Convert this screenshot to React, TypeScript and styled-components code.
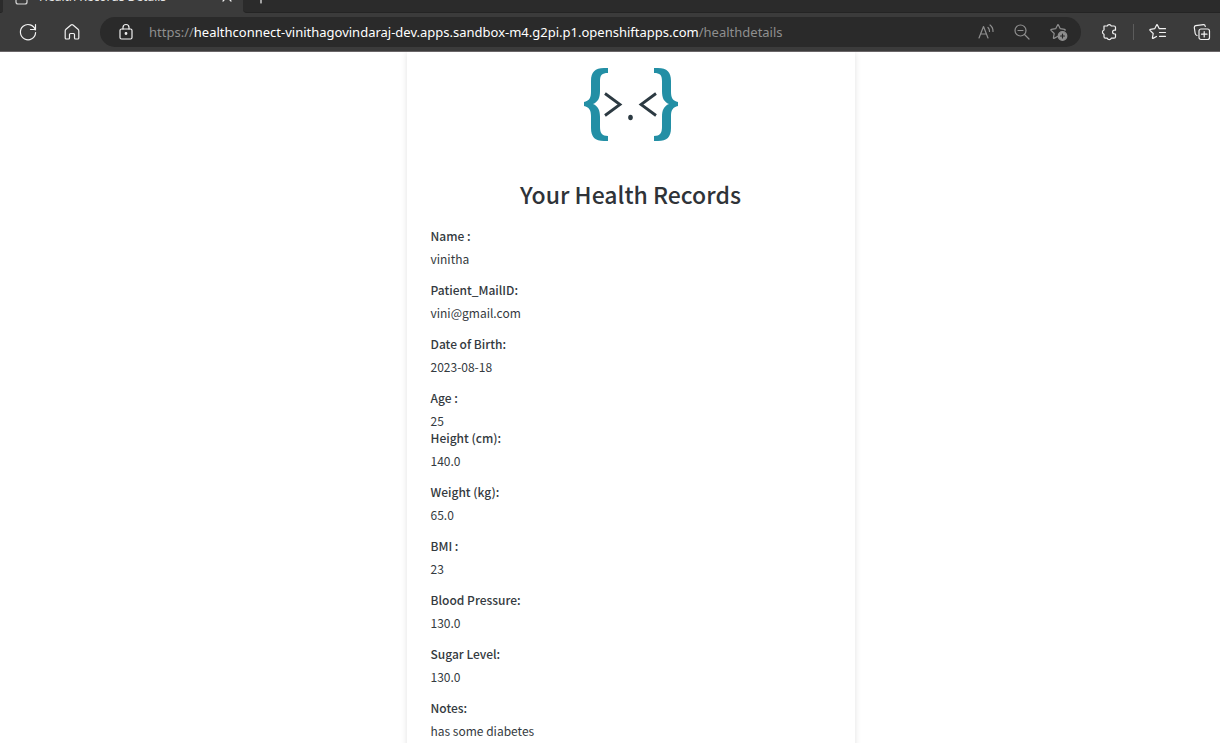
import React from "react";
import styled, { createGlobalStyle } from "styled-components";

const GlobalStyle = createGlobalStyle`
  *, *::before, *::after { box-sizing: border-box; }
  html, body, #root { height: 100%; }
  body {
    margin: 0;
    overflow: hidden;
    background: #fff;
    color: #343a40;
    font-family: "Noto Sans CJK SC", "Open Sans", sans-serif;
  }
`;

const Window = styled.div`
  display: flex;
  flex-direction: column;
  height: 100%;
`;

const Chrome = styled.header`
  flex: none;
  background: #3b3b3b;
  border-bottom: 1px solid #6a6668;
  font-family: "Noto Sans", "Open Sans", sans-serif;
`;

const TabStrip = styled.div`
  display: flex;
  align-items: flex-end;
  height: 13px;
  overflow: hidden;
  background: #3b3b3b;
`;

const StripEdge = styled.div<{ $grow?: boolean }>`
  flex: ${(p) => (p.$grow ? "1" : "none")};
  display: flex;
  align-items: center;
  width: 3px;
  height: 32px;
  padding-left: ${(p) => (p.$grow ? "8px" : "0")};
  background: #2b2b2b;
  border-bottom: 1px solid #242424;
  border-radius: ${(p) => (p.$grow ? "0 0 0 4px" : "0 0 4px 0")};
`;

const Tab = styled.div`
  display: flex;
  align-items: center;
  gap: 10px;
  width: 240px;
  height: 32px;
  padding: 0 6px 0 12px;
  color: #e4e4e4;
  font-size: 12px;
  line-height: 16px;
`;

const TabTitle = styled.span`
  flex: 1;
  white-space: nowrap;
`;

const IconButton = styled.button<{ $dim?: boolean }>`
  flex: none;
  display: flex;
  align-items: center;
  justify-content: center;
  width: 20px;
  height: 20px;
  padding: 0;
  border: 0;
  background: none;
  color: ${(p) => (p.$dim ? "#8f8f8f" : "#f1f1f1")};
`;

const Toolbar = styled.div`
  display: flex;
  align-items: center;
  height: 38px;
  padding: 0 8px 0 18px;
`;

const NavButtons = styled.div`
  display: flex;
  gap: 24px;
  margin-right: 18px;
`;

const AddressBar = styled.form`
  flex: 1;
  display: flex;
  align-items: center;
  min-width: 0;
  height: 30px;
  padding: 0 12px 0 16px;
  border-radius: 15px;
  background: #2a2a2a;
`;

const Address = styled.label`
  flex: 1;
  display: flex;
  align-items: center;
  min-width: 0;
  margin-left: 13px;
  overflow: hidden;
  color: #8f8f8f;
  font-size: 13px;
  line-height: 20px;
`;

const HostInput = styled.input`
  field-sizing: content;
  height: 20px;
  padding: 0;
  border: 0;
  outline: 0;
  background: none;
  color: #fff;
  font: inherit;
`;

const AddressActions = styled.div`
  display: flex;
  gap: 16px;
`;

const Extensions = styled.div`
  display: flex;
  align-items: center;
  margin-left: 18px;
`;

const Divider = styled.span`
  width: 1px;
  height: 16px;
  margin: 0 14px;
  background: #5c5c5c;
`;

const Spacer = styled.span`
  width: 24px;
`;

const Page = styled.main`
  flex: 1;
  display: flex;
  justify-content: center;
  min-height: 0;
  padding-left: 41px;
  overflow: hidden;
`;

const Card = styled.section`
  display: flex;
  flex-direction: column;
  align-self: flex-start;
  width: 100%;
  max-width: 448px;
  min-height: 100%;
  padding: 14px 24px 24px;
  background: #fff;
  box-shadow: 0 0 6px rgba(0, 0, 0, 0.12);
`;

const Logo = styled.svg`
  align-self: center;
  width: 96px;
  height: 76px;
`;

const Title = styled.h1`
  margin: 34px 0 15px;
  color: #2f3338;
  font-size: 23px;
  font-weight: 500;
  line-height: 36px;
  text-align: center;
`;

const Records = styled.dl`
  margin: 0;
`;

const RecordItem = styled.div<{ $tight?: boolean }>`
  margin-bottom: ${(p) => (p.$tight ? "0" : "14px")};
  font-size: 12px;
  line-height: 17px;
`;

const RecordLabel = styled.dt`
  margin-bottom: 6px;
  font-weight: 500;
`;

const RecordValue = styled.dd`
  margin: 0;
`;

const records: { label: string; value: string; tight?: boolean }[] = [
  { label: "Name :", value: "vinitha" },
  { label: "Patient_MailID:", value: "vini@gmail.com" },
  { label: "Date of Birth:", value: "2023-08-18" },
  { label: "Age :", value: "25", tight: true },
  { label: "Height (cm):", value: "140.0" },
  { label: "Weight (kg):", value: "65.0" },
  { label: "BMI :", value: "23" },
  { label: "Blood Pressure:", value: "130.0" },
  { label: "Sugar Level:", value: "130.0" },
  { label: "Notes:", value: "has some diabetes" },
];

const Icon = ({ children }: { children: React.ReactNode }) => (
  <svg
    width="20"
    height="20"
    viewBox="0 0 20 20"
    fill="none"
    stroke="currentColor"
    strokeWidth="1.2"
    strokeLinecap="round"
    strokeLinejoin="round"
    aria-hidden="true"
  >
    {children}
  </svg>
);

const bracePath =
  "M25 2V7C19 7 17 9 17 15V25C17 32 15 36 10 38C15 40 17 44 17 51V61C17 67 19 70 25 70V75H21C12 75 8 71 8 62V50C8 44 6 41 1 40V36C6 35 8 32 8 26V15C8 6 12 2 21 2Z";

const BraceLogo = () => (
  <Logo viewBox="0 0 96 76" role="img" aria-label="Health Connect logo">
    <g fill="#238fa5">
      <path d={bracePath} />
      <path transform="translate(96 0) scale(-1 1)" d={bracePath} />
    </g>
    <path d="M22 27.500L37 38.500L22 49.500M73 27.500L58 38.500L73 49.500" fill="none" stroke="#2c3a42" strokeWidth="2.800" />
    <ellipse cx="47.500" cy="51.500" rx="2.300" ry="2.800" fill="#2c3a42" />
  </Logo>
);

export default function App() {
  return (
    <Window>
      <GlobalStyle />
      <Chrome>
        <TabStrip>
          <StripEdge />
          <Tab>
            <svg width="14" height="16" viewBox="0 0 14 16" fill="none" stroke="#d8d8d8" strokeWidth="1.200" aria-hidden="true">
              <path d="M2 1H8L12 5V13Q12 15 10 15H3Q1 15 1 13V2Z" />
            </svg>
            <TabTitle>Health Records Details</TabTitle>
            <IconButton type="button" aria-label="Close tab">
              <Icon>
                <path d="M6 6L14 14M14 6L6 14" />
              </Icon>
            </IconButton>
          </Tab>
          <StripEdge $grow>
            <IconButton type="button" aria-label="New tab">
              <Icon>
                <path d="M10 4V16M4 10H16" />
              </Icon>
            </IconButton>
          </StripEdge>
        </TabStrip>
        <Toolbar>
          <NavButtons>
            <IconButton type="button" aria-label="Refresh">
              <Icon>
                <path d="M17.300 8A7.600 7.600 0 1 0 17.600 10.500M17.500 2.500V7.500H12.500" />
              </Icon>
            </IconButton>
            <IconButton type="button" aria-label="Home">
              <Icon>
                <path d="M3.200 9Q3.200 8 4 7.300L9 3Q10 2.200 11 3L16 7.300Q16.800 8 16.800 9V16Q16.800 17 15.800 17H13.500Q12.500 17 12.500 16V12.500Q12.500 11.500 11.500 11.500H8.500Q7.500 11.500 7.500 12.500V16Q7.500 17 6.500 17H4.200Q3.200 17 3.200 16Z" />
              </Icon>
            </IconButton>
          </NavButtons>
          <AddressBar onSubmit={(e) => e.preventDefault()}>
            <IconButton type="button" aria-label="Site information">
              <Icon>
                <rect x="4" y="7" width="12" height="10" rx="1.500" />
                <path d="M7 7V5.500A3 3 0 0 1 13 5.500V7" />
                <circle cx="10" cy="11.500" r="0.800" fill="currentColor" />
              </Icon>
            </IconButton>
            <Address>
              <span>https://</span>
              <HostInput
                aria-label="Address"
                defaultValue="healthconnect-vinithagovindaraj-dev.apps.sandbox-m4.g2pi.p1.openshiftapps.com"
              />
              <span>/healthdetails</span>
            </Address>
            <AddressActions>
              <IconButton type="button" $dim aria-label="Read aloud">
                <Icon>
                  <path d="M2 16L6.500 4.500L11 16M3.500 12H9.500M11 5.500Q12.600 7 12.500 9.500M13 3Q16.200 5.500 16 9.500" />
                </Icon>
              </IconButton>
              <IconButton type="button" $dim aria-label="Zoom out">
                <Icon>
                  <circle cx="7.500" cy="8.500" r="5.500" />
                  <path d="M11.500 12.500L16 17M5 8.500H10" />
                </Icon>
              </IconButton>
              <IconButton type="button" $dim aria-label="Add to favorites">
                <Icon>
                  <path d="M8.500 14.500L5 16.400Q4.300 16.600 4.400 15.800L5.200 11.500L2 8.300Q1.500 7.600 2.400 7.400L6.700 6.700L8.600 2.900Q9 2.200 9.400 2.900L11.300 6.700L15.600 7.400Q16.500 7.600 16 8.300" />
                  <circle cx="13.500" cy="14" r="4.300" fill="currentColor" />
                  <path d="M13.500 12V16M11.500 14H15.500" stroke="#2a2a2a" />
                </Icon>
              </IconButton>
            </AddressActions>
          </AddressBar>
          <Extensions>
            <IconButton type="button" aria-label="Extensions">
              <Icon>
                <path d="M5 4H8.200A2.200 2.200 0 0 1 12.300 4H15Q16.500 4 16.500 5.500V8.200H15.500A1.900 1.900 0 0 0 15.500 12H16.500V14.700Q16.500 16.200 15 16.200H12.300A2.200 2.200 0 0 1 8.200 16.200H6.500Q5 16.200 5 14.700V12.200A2.200 2.200 0 0 1 5 8Z" />
              </Icon>
            </IconButton>
            <Divider />
            <IconButton type="button" aria-label="Favorites">
              <Icon>
                <path d="M8.500 14.500L5 16.400Q4.300 16.600 4.400 15.800L5.200 11.500L2 8.300Q1.500 7.600 2.400 7.400L6.700 6.700L8.600 2.900Q9 2.200 9.400 2.900L11.300 6.700M11.300 6.700H17.500M11.500 10.500H17.500M11.500 14.300H17.500" />
              </Icon>
            </IconButton>
            <Spacer />
            <IconButton type="button" aria-label="Collections">
              <Icon>
                <rect x="7" y="7" width="10.500" height="10.500" rx="2" />
                <path d="M12.200 9.500V15M9.500 12.200H15M5 13.500Q3.500 13 3.200 11.500L2.300 5.500Q2.200 4 3.700 3.700L11.500 2.600Q13 2.500 13.300 4.500" />
              </Icon>
            </IconButton>
          </Extensions>
        </Toolbar>
      </Chrome>
      <Page>
        <Card>
          <BraceLogo />
          <Title>Your Health Records</Title>
          <Records>
            {records.map((r) => (
              <RecordItem key={r.label} $tight={r.tight}>
                <RecordLabel>{r.label}</RecordLabel>
                <RecordValue>{r.value}</RecordValue>
              </RecordItem>
            ))}
          </Records>
        </Card>
      </Page>
    </Window>
  );
}
